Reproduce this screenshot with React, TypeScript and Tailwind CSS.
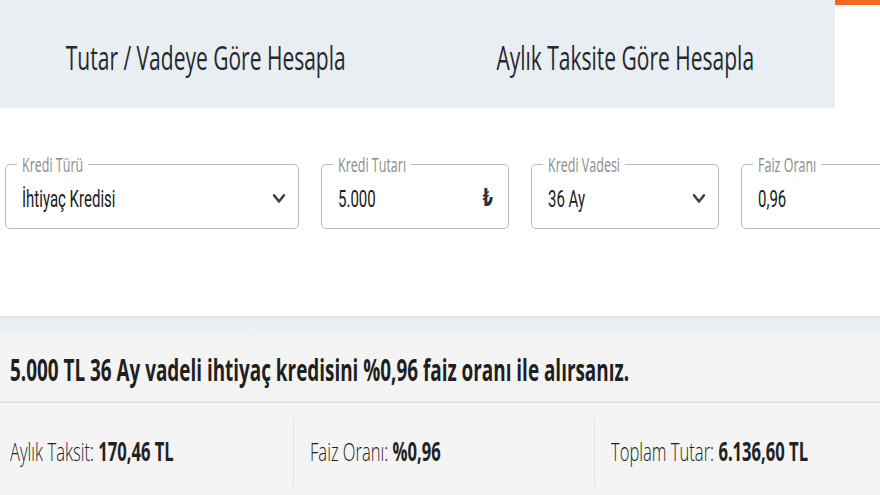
import { type ReactNode } from 'react';

const Tall = ({ children, className = '' }: { children: ReactNode; className?: string }) => (
  <span className={`inline-block scale-y-[1.6] whitespace-nowrap ${className}`}>{children}</span>
);

const Chevron = () => (
  <svg width="14" height="11" viewBox="0 0 14 11" className="mt-[4px] shrink-0">
    <path d="M2 2.2 L7 8.6 L12 2.2" fill="none" stroke="#3d3d3d" strokeWidth="2.5" strokeLinecap="round" strokeLinejoin="round" />
  </svg>
);

const Field = ({
  label,
  value,
  width,
  suffix,
}: {
  label: string;
  value: string;
  width: string;
  suffix?: ReactNode;
}) => (
  <div className={`relative flex h-[65px] shrink-0 items-center justify-between rounded-[5px] border border-[#bcbcbc] pr-[12px] pl-[16px] ${width}`}>
    {/* notched label on the top border */}
    <div className="absolute -top-[7px] left-[11px] bg-white px-[5px] font-['Open_Sans'] text-[12.5px] leading-[16px] text-[#8c8c8c]">
      <Tall>{label}</Tall>
    </div>
    <div className="pt-[6px] font-['Roboto','Liberation_Sans',sans-serif] text-[15px] text-[#202020]">
      <Tall>{value}</Tall>
    </div>
    {suffix}
  </div>
);

const Stat = ({ label, value, className }: { label: string; value: string; className: string }) => (
  <div className={`flex h-[67px] shrink-0 items-center ${className}`}>
    <Tall className="text-[16.6px] text-[#222]">
      <span className="font-light">{label}</span>
      <span className="font-bold">{value}</span>
    </Tall>
  </div>
);

export default function App() {
  return (
    <div className="h-[495px] w-[880px] overflow-hidden bg-white font-['Open_Sans','Liberation_Sans',sans-serif]">
      {/* tabs */}
      <div className="flex h-[108px]">
        <div className="flex w-[835px] bg-[#e9eef2] shadow-[2px_0_3px_rgba(0,0,0,0.04)]">
          <div className="flex flex-1 items-center justify-center pt-[9px] pr-[8px] text-[21px] text-[#25292d]">
            <Tall>Tutar / Vadeye Göre Hesapla</Tall>
          </div>
          <div className="flex flex-1 items-center justify-center pt-[9px] pr-[4px] text-[21px] text-[#25292d]">
            <Tall>Aylık Taksite Göre Hesapla</Tall>
          </div>
        </div>
        <div className="flex-1 border-t-[5px] border-[#f2661f] bg-white" />
      </div>

      {/* form */}
      <div className="flex h-[208px] items-start gap-[22px] pt-[56px] pl-[5px]">
        <Field label="Kredi Türü" value="İhtiyaç Kredisi" width="w-[294px]" suffix={<Chevron />} />
        <Field
          label="Kredi Tutarı"
          value="5.000"
          width="w-[188px]"
          suffix={
            <span className="pt-[4px] pr-[3px] font-['DejaVu_Sans',sans-serif] text-[15px] font-bold text-[#333]">
              <Tall>₺</Tall>
            </span>
          }
        />
        <Field label="Kredi Vadesi" value="36 Ay" width="w-[188px]" suffix={<Chevron />} />
        <Field label="Faiz Oranı" value="0,96" width="w-[188px]" />
      </div>

      {/* result */}
      <div className="h-[179px] border-t-2 border-[#e2e2e2] bg-[#f4f4f4]">
        <div className="h-[18px] bg-gradient-to-b from-[#e8ecf0] to-[#f1f3f5]" />
        <div className="flex h-[67px] items-center border-b-2 border-[#e4e4e4] pt-[4px] pl-[10px] text-[18.9px] font-bold text-[#1f1f1f]">
          <Tall>5.000 TL 36 Ay vadeli ihtiyaç kredisini %0,96 faiz oranı ile alırsanız.</Tall>
        </div>
        <div className="flex pt-[16px]">
          <Stat label="Aylık Taksit: " value="170,46 TL" className="w-[293px] pl-[10px]" />
          <div className="h-[68px] w-px bg-[#e0e0e0]" />
          <Stat label="Faiz Oranı: " value="%0,96" className="w-[300px] pl-[16px]" />
          <div className="h-[68px] w-px bg-[#e0e0e0]" />
          <Stat label="Toplam Tutar: " value="6.136,60 TL" className="flex-1 pl-[16px]" />
        </div>
      </div>
    </div>
  );
}
